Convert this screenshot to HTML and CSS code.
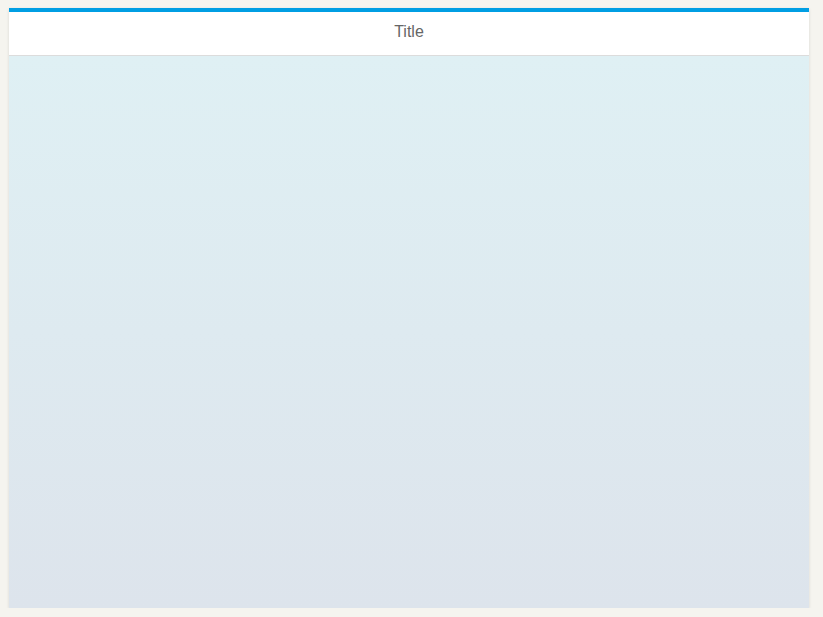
FILE: index.html
```html
<!DOCTYPE html>
<html lang="en">

<head>
    <meta charset="UTF-8">
    <meta name="viewport" content="width=device-width, initial-scale=1.0">
    <title>Title</title>
    <link rel="stylesheet" href="styles.css">
</head>

<body>
    <div class="panel">
        <div class="panel-header">Title</div>
        <div class="panel-body"></div>
    </div>
</body>

</html>
```

FILE: styles.css
```css
body {
    background-color: #f5f4ef;
    margin: 0;
    padding: 8px 0 0 9px;
    font-family: "Liberation Sans", Arial, sans-serif;
}

.panel {
    width: 800px;
    height: 600px;
    display: flex;
    flex-direction: column;
    border-top: 4px solid #009ee3;
    box-sizing: border-box;
    background-color: #fff;
    box-shadow: 0 1px 3px rgba(0, 0, 0, 0.12);
}

.panel-header {
    height: 43px;
    line-height: 40px;
    text-align: center;
    font-size: 16px;
    color: #666;
    border-bottom: 1px solid #dcdcdc;
}

.panel-body {
    flex: 1;
    background: linear-gradient(to bottom, #dff0f4, #dde4ec);
}
```
